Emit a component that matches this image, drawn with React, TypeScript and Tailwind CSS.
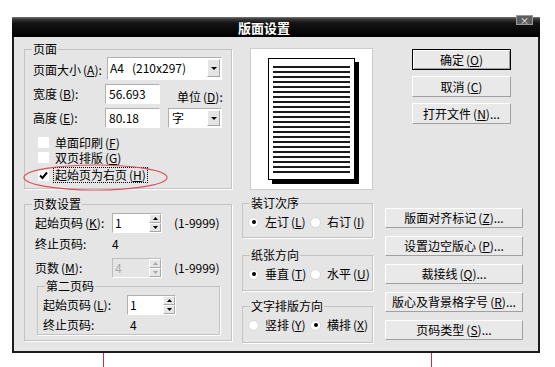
import type { ReactNode } from 'react';

const FONT = "font-['Noto_Sans_CJK_SC','Noto_Sans',sans-serif]";

// mnemonic "(X)" with the letter underlined
function Mn({ k, after = '' }: { k: string; after?: string }) {
  return (
    <span className="inline-block ml-[2px] leading-[12px]">
      (<span className="underline underline-offset-[1px]">{k}</span>){after}
    </span>
  );
}

function Group({ title, className = '', children }: { title: string; className?: string; children: ReactNode }) {
  return (
    <fieldset className={`border border-[#c3c3c3] shadow-[1px_1px_0_#fff] ${className}`}>
      <legend className="ml-[7px] px-[1px] h-[14px] leading-[14px]">{title}</legend>
      {children}
    </fieldset>
  );
}

function DropArrow() {
  return (
    <div className="w-[13px] h-[18px] mt-[1px] mr-px bg-[#e4e4e4] border border-t-white border-l-white border-r-[#a4a4a4] border-b-[#a4a4a4] flex items-center justify-center">
      <svg width="6" height="3" viewBox="0 0 6 3">
        <path d="M0 0h6L3 3z" fill="#000" />
      </svg>
    </div>
  );
}

function SpinArrows({ disabled }: { disabled?: boolean }) {
  const fill = disabled ? '#a8a8a8' : '#000';
  return (
    <div className="w-[12px] flex flex-col">
      <div className="flex-1 bg-[#e6e6e6] border border-t-white border-l-white border-r-[#a8a8a8] border-b-[#a8a8a8] flex items-center justify-center">
        <svg width="5" height="3" viewBox="0 0 5 3">
          <path d="M0 3h5L2.5 0z" fill={fill} />
        </svg>
      </div>
      <div className="flex-1 bg-[#e6e6e6] border border-t-white border-l-white border-r-[#a8a8a8] border-b-[#a8a8a8] flex items-center justify-center">
        <svg width="5" height="3" viewBox="0 0 5 3">
          <path d="M0 0h5L2.5 3z" fill={fill} />
        </svg>
      </div>
    </div>
  );
}

function Check({ on }: { on?: boolean }) {
  return (
    <span className="w-[11px] h-[11px] bg-white shrink-0 flex items-center justify-center">
      {on && (
        <svg width="9" height="9" viewBox="0 0 9 9">
          <path d="M1 4.5L3.5 7L8 1.5" stroke="#000" strokeWidth="2" fill="none" />
        </svg>
      )}
    </span>
  );
}

function Radio({ on }: { on?: boolean }) {
  return (
    <span className="w-[11px] h-[11px] rounded-full bg-white border border-[#d6d6d6] shrink-0 flex items-center justify-center">
      {on && <span className="w-[4px] h-[4px] rounded-full bg-black" />}
    </span>
  );
}

const btn =
  'flex items-center justify-center bg-[#e9e9e9] border border-t-white border-l-white border-r-[#a0a0a0] border-b-[#a0a0a0]';

export default function App() {
  const lines = Array.from({ length: 22 });

  return (
    <div className={`relative w-[555px] h-[367px] overflow-hidden bg-white text-[12px] leading-[12px] text-black ${FONT}`}>
      <div className="pt-[17px] pl-[12px]">
        <div className="w-[528px] h-[336px] flex flex-col">
          {/* title bar */}
          <div className="relative h-[20px] shrink-0 flex items-center justify-center pr-[24px] bg-[linear-gradient(to_bottom,#7a7a7a_0px,#3a3a3a_2px,#141414_6px,#000_100%)]">
            <span className="text-white font-bold text-[13px] leading-[13px]">版面设置</span>
            <div className="absolute -top-[2px] right-[7px] w-[17px] h-[10px] bg-[#5e5e5e] border border-[#9a9a9a] flex items-center justify-center text-white text-[9px] leading-[9px]">
              ×
            </div>
          </div>

          {/* body */}
          <div className="flex-1 flex bg-[#e5e5e5] border-x-2 border-b-2 border-[#1c1c1c] pl-[10px]">
            {/* left column */}
            <div className="w-[208px] flex flex-col">
              <Group title="页面" className="mt-[5px] pb-[5px]">
                <div className="mt-[1px] flex h-[23px]">
                  <span className="w-[82px] pl-[8px] pt-[7px] whitespace-nowrap">
                    页面大小<Mn k="A" after=":" />
                  </span>
                  <div className="w-[115px] h-[23px] flex bg-white border border-[#b0b0b0] border-r-white border-b-white">
                    <span className="flex-1 pl-[2px] pt-[4px] whitespace-nowrap">
                      A4<span className="ml-[8px]">(210x297)</span>
                    </span>
                    <DropArrow />
                  </div>
                </div>
                <div className="mt-[4px] flex h-[20px] items-center">
                  <span className="w-[80px] pl-[8px] whitespace-nowrap">
                    宽度<Mn k="B" after=":" />
                  </span>
                  <div className="w-[55px] h-[20px] flex items-center pl-[3px] bg-white border border-[#b0b0b0] border-r-white border-b-white">
                    56.693
                  </div>
                  <span className="ml-[17px] mt-[6px] whitespace-nowrap">
                    单位<Mn k="D" after=":" />
                  </span>
                </div>
                <div className="mt-[4px] flex h-[20px] items-center">
                  <span className="w-[80px] pl-[8px] whitespace-nowrap">
                    高度<Mn k="E" after=":" />
                  </span>
                  <div className="w-[55px] h-[20px] flex items-center pl-[3px] bg-white border border-[#b0b0b0] border-r-white border-b-white">
                    80.18
                  </div>
                  <div className="ml-[8px] w-[54px] h-[20px] flex bg-white border border-[#b0b0b0] border-r-white border-b-white">
                    <span className="flex-1 pl-[3px] flex items-center">字</span>
                    <div className="flex items-start">
                      <div className="w-[13px] h-[16px] mt-px mr-px bg-[#e4e4e4] border border-t-white border-l-white border-r-[#a4a4a4] border-b-[#a4a4a4] flex items-center justify-center">
                        <svg width="6" height="3" viewBox="0 0 6 3">
                          <path d="M0 0h6L3 3z" fill="#000" />
                        </svg>
                      </div>
                    </div>
                  </div>
                </div>
                <div className="mt-[7px] h-[15px] flex items-center pl-[13px]">
                  <Check />
                  <span className="ml-[6px] whitespace-nowrap">
                    单面印刷<Mn k="F" />
                  </span>
                </div>
                <div className="h-[15px] flex items-center pl-[13px]">
                  <Check />
                  <span className="ml-[6px] whitespace-nowrap">
                    双页排版<Mn k="G" />
                  </span>
                </div>
                <div className="mt-[2px] h-[16px] flex items-center pl-[13px]">
                  <Check on />
                  <span className="ml-[4px] h-[16px] px-[1px] flex items-center border border-dotted border-black whitespace-nowrap">
                    起始页为右页<Mn k="H" />
                  </span>
                </div>
              </Group>

              <Group title="页数设置" className="mt-[8px] pb-[5px]">
                <div className="mt-[2px] flex h-[20px] items-center">
                  <span className="w-[87px] pl-[10px] whitespace-nowrap">
                    起始页码<Mn k="K" after=":" />
                  </span>
                  <div className="w-[50px] h-[20px] flex bg-white border border-[#b0b0b0] border-r-white border-b-white">
                    <span className="flex-1 pl-[2px] flex items-center">1</span>
                    <SpinArrows />
                  </div>
                  <span className="ml-[12px]">(1-9999)</span>
                </div>
                <div className="mt-[3px] flex h-[16px] items-center">
                  <span className="w-[87px] pl-[10px]">终止页码:</span>
                  <span>4</span>
                </div>
                <div className="mt-[6px] flex h-[20px] items-center">
                  <span className="w-[87px] pl-[10px] whitespace-nowrap">
                    页数<Mn k="M" after=":" />
                  </span>
                  <div className="w-[50px] h-[20px] flex bg-[#e5e5e5] border border-[#bdbdbd] border-r-white border-b-white">
                    <span className="flex-1 pl-[2px] flex items-center text-[#a8a8a8]">4</span>
                    <SpinArrows disabled />
                  </div>
                  <span className="ml-[12px]">(1-9999)</span>
                </div>
                <Group title="第二页码" className="mt-[1px] ml-[12px] w-[183px] pb-[1px]">
                  <div className="mt-[2px] flex h-[20px] items-center">
                    <span className="w-[89px] pl-[5px] whitespace-nowrap">
                      起始页码<Mn k="L" after=":" />
                    </span>
                    <div className="w-[49px] h-[20px] flex bg-white border border-[#b0b0b0] border-r-white border-b-white">
                      <span className="flex-1 pl-[2px] flex items-center">1</span>
                      <SpinArrows />
                    </div>
                  </div>
                  <div className="mt-[2px] flex h-[16px] items-center">
                    <span className="w-[92px] pl-[5px]">终止页码:</span>
                    <span>4</span>
                  </div>
                </Group>
              </Group>
            </div>

            {/* middle column */}
            <div className="ml-[10px] w-[131px] flex flex-col">
              <div className="ml-[8px] mt-[11px] w-[123px] h-[142px] bg-white border border-[#cdcdcd] pl-[17px] pt-[9px]">
                <div className="w-[87px] h-[122px] bg-white border border-black shadow-[4px_4px_0_#000] px-[4px] pt-[7px] flex flex-col gap-[3px]">
                  {lines.map((_, i) => (
                    <div key={i} className="h-[2px] bg-[#1a1a1a]" />
                  ))}
                </div>
              </div>

              <Group title="装订次序" className="mt-[6px] pb-[7px]">
                <div className="mt-[4px] h-[16px] flex items-center pl-[5px]">
                  <div className="w-[62px] flex items-center">
                    <Radio on />
                    <span className="ml-[6px] whitespace-nowrap">
                      左订<Mn k="L" />
                    </span>
                  </div>
                  <div className="flex items-center">
                    <Radio />
                    <span className="ml-[6px] whitespace-nowrap">
                      右订<Mn k="I" />
                    </span>
                  </div>
                </div>
              </Group>

              <Group title="纸张方向" className="mt-[10px] pb-[8px]">
                <div className="mt-[4px] h-[16px] flex items-center pl-[5px]">
                  <div className="w-[62px] flex items-center">
                    <Radio on />
                    <span className="ml-[6px] whitespace-nowrap">
                      垂直<Mn k="T" />
                    </span>
                  </div>
                  <div className="flex items-center">
                    <Radio />
                    <span className="ml-[6px] whitespace-nowrap">
                      水平<Mn k="U" />
                    </span>
                  </div>
                </div>
              </Group>

              <Group title="文字排版方向" className="mt-[8px] pb-[9px]">
                <div className="mt-[4px] h-[16px] flex items-center pl-[5px]">
                  <div className="w-[62px] flex items-center">
                    <Radio />
                    <span className="ml-[6px] whitespace-nowrap">
                      竖排<Mn k="Y" />
                    </span>
                  </div>
                  <div className="flex items-center">
                    <Radio on />
                    <span className="ml-[6px] whitespace-nowrap">
                      横排<Mn k="X" />
                    </span>
                  </div>
                </div>
              </Group>
            </div>

            {/* right column */}
            <div className="ml-[12px] w-[138px] flex flex-col">
              <div className="ml-[27px] mt-[12px] w-[99px] h-[21px] flex items-center justify-center bg-[#e9e9e9] border border-black shadow-[inset_1px_1px_0_#fff,inset_-1px_-1px_0_#a0a0a0]">
                确定<Mn k="O" />
              </div>
              <div className={`ml-[27px] mt-[6px] w-[99px] h-[21px] ${btn}`}>
                取消<Mn k="C" />
              </div>
              <div className={`ml-[27px] mt-[6px] w-[99px] h-[21px] ${btn}`}>
                打开文件<Mn k="N" after="..." />
              </div>

              <div className="mt-[84px] flex flex-col gap-[8px]">
                <div className={`h-[20px] ${btn}`}>
                  版面对齐标记<Mn k="Z" after="..." />
                </div>
                <div className={`h-[20px] ${btn}`}>
                  设置边空版心<Mn k="P" after="..." />
                </div>
                <div className={`h-[20px] ${btn}`}>
                  裁接线<Mn k="Q" after="..." />
                </div>
                <div className={`h-[20px] ${btn} whitespace-nowrap`}>
                  版心及背景格字号<Mn k="R" after="..." />
                </div>
                <div className={`h-[20px] ${btn}`}>
                  页码类型<Mn k="S" after="..." />
                </div>
              </div>
            </div>
          </div>
        </div>
      </div>

      {/* annotation leader lines below the dialog */}
      <div className="flex h-[14px]">
        <div className="ml-[103px] w-px h-full bg-[#c8324e]" />
        <div className="ml-[327px] w-px h-full bg-[#c8324e]" />
      </div>

      {/* red annotation ring around the checkbox */}
      <svg className="absolute left-[23px] top-[164px]" width="145" height="27" viewBox="0 0 145 27">
        <ellipse cx="72.5" cy="13.5" rx="71.5" ry="12.5" fill="none" stroke="#d9535a" strokeWidth="1.2" />
      </svg>
    </div>
  );
}
